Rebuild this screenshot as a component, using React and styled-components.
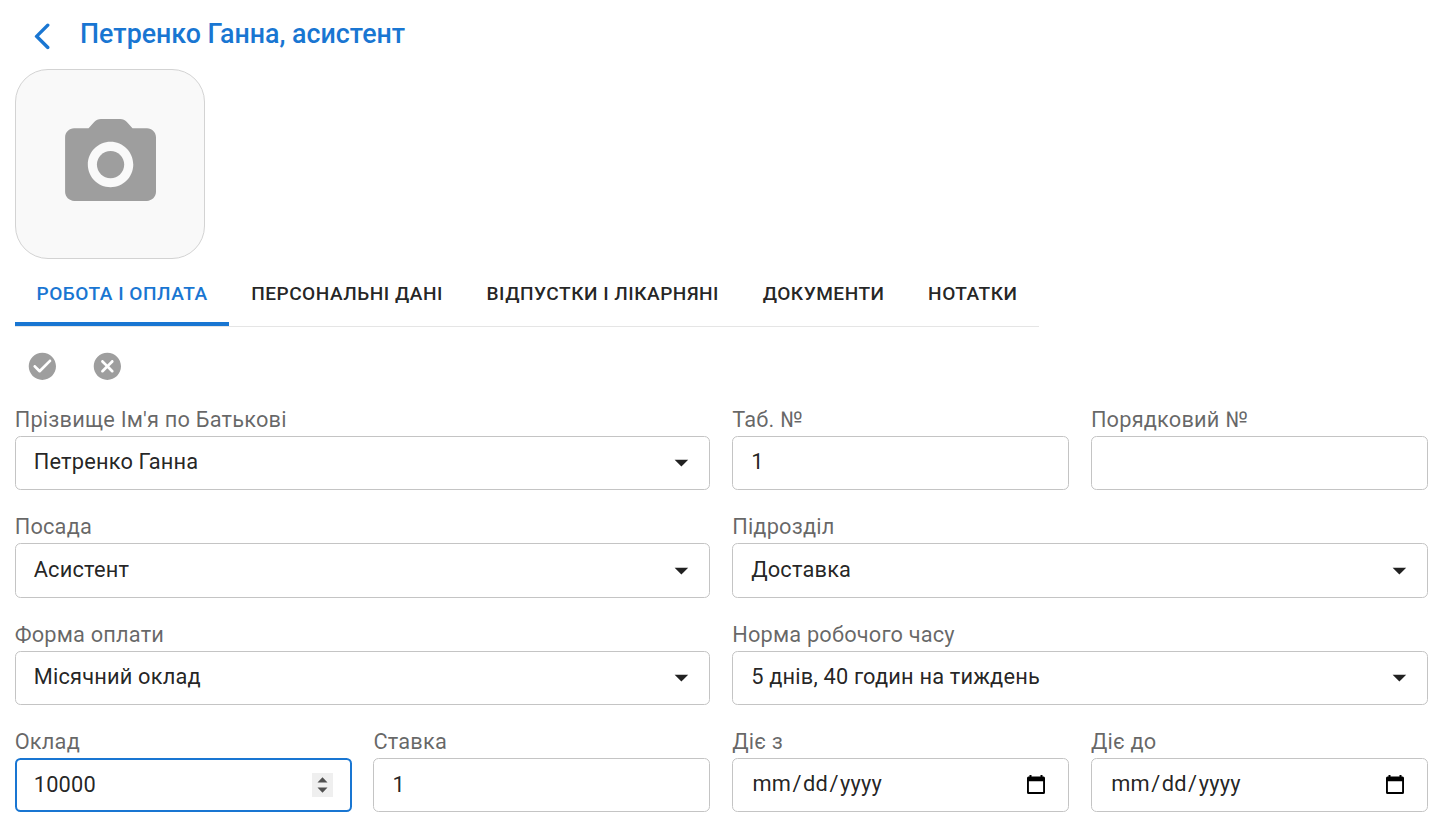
import React from "react";
import styled, { createGlobalStyle } from "styled-components";

const GlobalStyle = createGlobalStyle`
  *, *::before, *::after { box-sizing: border-box; }
  body {
    margin: 0;
    background: #fff;
    color: rgba(0, 0, 0, 0.87);
    font-family: Roboto, "Liberation Sans", sans-serif;
    overflow: hidden;
  }
`;

const Page = styled.main`
  display: flex;
  flex-direction: column;
  padding: 9px 7.2px 0 14.7px;
`;

const Header = styled.header`
  display: flex;
  align-items: center;
  gap: 10.9px;
  height: 60px;
  padding-bottom: 6px;
`;

const IconButton = styled.button`
  display: flex;
  align-items: center;
  justify-content: center;
  width: 54.5px;
  height: 54.5px;
  padding: 0;
  border: 0;
  background: none;
  color: ${(p) => (p.$primary ? "#1976d2" : "#9e9e9e")};
`;

const Icon = styled.svg`
  display: block;
  width: ${(p) => p.$size || 32.73}px;
  height: ${(p) => p.$size || 32.73}px;
  fill: currentColor;
`;

const Title = styled.h1`
  margin: 0 0 4px;
  color: #1976d2;
  font-size: 26.8px;
  font-weight: 500;
  line-height: 40px;
  letter-spacing: 0;
`;

const Photo = styled.div`
  display: flex;
  align-items: center;
  justify-content: center;
  width: 190px;
  height: 190px;
  padding: 1px 0 0 1px;
  border: 1px solid #d3d3d3;
  border-radius: 33px;
  background: #f9f9f9;
  color: #9e9e9e;
`;

const Tabs = styled.nav`
  display: flex;
  align-self: flex-start;
  width: 1024px;
  height: 68px;
  border-bottom: 1px solid #e5e5e5;
`;

const Tab = styled.button`
  padding: 7px 21.8px 0;
  border: 0;
  border-bottom: 4px solid ${(p) => (p.$active ? "#1976d2" : "transparent")};
  background: none;
  color: ${(p) => (p.$active ? "#1976d2" : "rgba(0, 0, 0, 0.87)")};
  font: 500 19.09px/24px Roboto, "Liberation Sans", sans-serif;
  letter-spacing: 0.503px;
  text-transform: uppercase;
  white-space: nowrap;
`;

const Actions = styled.div`
  display: flex;
  gap: 10.6px;
  padding-top: 12px;
  height: 77.7px;
`;

const Form = styled.form`
  display: grid;
  grid-template-columns: repeat(4, minmax(0, 1fr));
  column-gap: 21.82px;
  row-gap: 22.05px;
`;

const FieldRoot = styled.div`
  grid-column: span ${(p) => p.$span};
  display: flex;
  flex-direction: column;
`;

const Label = styled.label`
  height: 31px;
  color: rgba(0, 0, 0, 0.6);
  font-size: 21.82px;
  line-height: 29.7px;
  letter-spacing: 0.17px;
  white-space: nowrap;
`;

const Control = styled.div`
  display: flex;
  align-items: center;
  justify-content: space-between;
  height: 54.4px;
  padding: 0 ${(p) => p.$end || 17}px 2px 18px;
  border: 1px solid #c4c4c4;
  border-radius: 5.5px;
  font-size: 21.82px;
  line-height: 31px;
  letter-spacing: 0.18px;
  ${(p) =>
    p.$focused &&
    `
    border: 2px solid #1976d2;
    padding: 0 17px 1px 17px;
  `}
`;

const Stepper = styled.span`
  display: flex;
  align-items: center;
  justify-content: center;
  width: 21px;
  height: 24px;
  background: #efefef;
`;

const DateText = styled.span`
  display: flex;
  margin-bottom: 2px;
`;

const DatePart = styled.span`
  padding: 0 1.36px;
`;

const CalendarSvg = styled.svg`
  display: block;
  margin-top: 1px;
`;

const CalendarIcon = () => (
  <CalendarSvg width="18" height="19" viewBox="0 0 18 19">
    <path d="M2.5 0h2v3h-2zM13.5 0h2v3h-2z" />
    <path
      fillRule="evenodd"
      d="M1.500 1.600h15a1.500 1.500 0 0 1 1.500 1.500V17.500a1.500 1.500 0 0 1-1.500 1.500H1.500a1.500 1.500 0 0 1-1.500-1.500V3.100a1.500 1.500 0 0 1 1.500-1.500zM1.900 6.200v10.900h14.200V6.200z"
    />
  </CalendarSvg>
);

const CaretSvg = styled.svg`
  display: block;
  margin-top: 3px;
`;

const Caret = () => (
  <CaretSvg width="22" height="22" viewBox="0 0 22 22">
    <path d="M4.600 7.700h13.600L11.400 14.500z" fill="rgba(0,0,0,0.87)" />
  </CaretSvg>
);

function Field({ label, value, kind = "text", span = 1, focused }) {
  return (
    <FieldRoot $span={span}>
      <Label>{label}</Label>
      <Control $focused={focused} $end={kind === "date" ? 23 : 17}>
        {kind === "date" ? (
          <DateText>
            <DatePart>mm</DatePart>/<DatePart>dd</DatePart>/<DatePart>yyyy</DatePart>
          </DateText>
        ) : (
          <span>{value}</span>
        )}
        {kind === "select" && <Caret />}
        {kind === "date" && <CalendarIcon />}
        {kind === "stepper" && (
          <Stepper>
            <svg width="11" height="16" viewBox="0 0 11 16" fill="#505050">
              <path d="M0.500 5.600 5.500 0.200 10.500 5.600zM0.500 10.400h10L5.500 15.800z" />
            </svg>
          </Stepper>
        )}
      </Control>
    </FieldRoot>
  );
}

const tabs = ["Робота і оплата", "Персональні дані", "Відпустки і лікарняні", "Документи", "Нотатки"];

const fields = [
  { label: "Прізвище Ім'я по Батькові", value: "Петренко Ганна", kind: "select", span: 2 },
  { label: "Таб. №", value: "1" },
  { label: "Порядковий №", value: "" },
  { label: "Посада", value: "Асистент", kind: "select", span: 2 },
  { label: "Підрозділ", value: "Доставка", kind: "select", span: 2 },
  { label: "Форма оплати", value: "Місячний оклад", kind: "select", span: 2 },
  { label: "Норма робочого часу", value: "5 днів, 40 годин на тиждень", kind: "select", span: 2 },
  { label: "Оклад", value: "10000", kind: "stepper", focused: true },
  { label: "Ставка", value: "1" },
  { label: "Діє з", kind: "date" },
  { label: "Діє до", kind: "date" },
];

export default function App() {
  return (
    <Page>
      <GlobalStyle />
      <Header>
        <IconButton $primary aria-label="Назад">
          <Icon viewBox="0 0 24 24">
            <path d="M16.880 2.880c-.49-.49-1.280-.49-1.770 0L6.700 11.290c-.39.39-.39 1.020 0 1.410l8.410 8.410c.49.49 1.280.49 1.770 0s.49-1.280 0-1.770L9.540 12l7.350-7.350c.48-.49.48-1.280-.01-1.770z" />
          </Icon>
        </IconButton>
        <Title>Петренко Ганна, асистент</Title>
      </Header>
      <Photo>
        <Icon viewBox="0 0 24 24" $size={109.1}>
          <circle cx="12" cy="12" r="3" />
          <path d="M20 4h-3.170l-1.240-1.350c-.37-.41-.91-.65-1.470-.65H9.880c-.56 0-1.100.24-1.480.65L7.170 4H4c-1.100 0-2 .9-2 2v12c0 1.100.9 2 2 2h16c1.100 0 2-.9 2-2V6c0-1.100-.9-2-2-2zm-8 13c-2.760 0-5-2.240-5-5s2.240-5 5-5 5 2.240 5 5-2.240 5-5 5z" />
        </Icon>
      </Photo>
      <Tabs>
        {tabs.map((t, i) => (
          <Tab key={t} $active={i === 0}>
            {t}
          </Tab>
        ))}
      </Tabs>
      <Actions>
        <IconButton aria-label="Зберегти">
          <Icon viewBox="0 0 24 24">
            <path d="M12 2C6.480 2 2 6.480 2 12s4.480 10 10 10 10-4.480 10-10S17.520 2 12 2zM9.290 16.290 5.700 12.700a.996.996 0 0 1 0-1.410c.39-.39 1.020-.39 1.410 0L10 14.170l6.880-6.880c.39-.39 1.020-.39 1.410 0 .39.39.39 1.020 0 1.410l-7.590 7.590c-.38.39-1.020.39-1.410 0z" />
          </Icon>
        </IconButton>
        <IconButton aria-label="Скасувати">
          <Icon viewBox="0 0 24 24">
            <path d="M12 2C6.470 2 2 6.470 2 12s4.470 10 10 10 10-4.470 10-10S17.530 2 12 2zm4.300 14.300c-.39.39-1.020.39-1.410 0L12 13.410 9.110 16.300c-.39.39-1.020.39-1.410 0a.996.996 0 0 1 0-1.410L10.590 12 7.700 9.110a.996.996 0 0 1 0-1.410c.39-.39 1.020-.39 1.410 0L12 10.590l2.890-2.890c.39-.39 1.020-.39 1.410 0 .39.39.39 1.020 0 1.410L13.410 12l2.890 2.890c.38.38.38 1.020 0 1.410z" />
          </Icon>
        </IconButton>
      </Actions>
      <Form>
        {fields.map((f) => (
          <Field key={f.label} {...f} />
        ))}
      </Form>
    </Page>
  );
}
